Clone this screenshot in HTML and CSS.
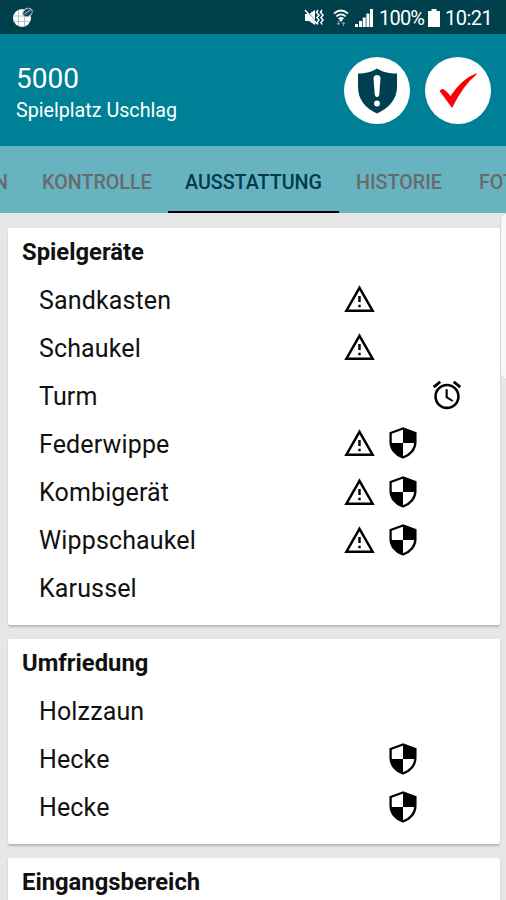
FILE: index.html
```html
<!DOCTYPE html>
<html lang="de">
<head>
<meta charset="utf-8">
<title>Spielplatz Uschlag</title>
<link rel="stylesheet" href="styles.css">
</head>
<body>
<svg class="defs" aria-hidden="true">
  <symbol id="warn" viewBox="0 0 31 28"><path d="M15.500 2.800L28.600 25.700H2.400z" fill="none" stroke="#000" stroke-width="2.500"/><path d="M14.300 11h2.400v6h-2.400zM14.300 19.800h2.400v2.400h-2.400z"/></symbol>
  <symbol id="shield" viewBox="0 0 28 32"><path d="M14 1.500L1.600 6V15c0 6.600 4.600 12.800 12.400 15.500C21.800 27.800 26.400 21.600 26.400 15V6z" fill="#fff" stroke="#000" stroke-width="2.300"/><path d="M14 1.500L26.400 6V16H14zM1.600 16H14v14.500C6.500 27.800 2 22 1.600 16z"/></symbol>
  <symbol id="alarm" viewBox="0 0 24 24"><path d="M22 5.720l-4.600-3.860-1.290 1.530 4.600 3.860L22 5.720zM7.880 3.390L6.600 1.860 2 5.710l1.290 1.530 4.590-3.850zM12.500 8H11v6l4.750 2.850.75-1.230-4-2.370V8zM12 4c-4.970 0-9 4.030-9 9s4.020 9 9 9c4.970 0 9-4.030 9-9s-4.030-9-9-9zm0 16.200c-3.980 0-7.200-3.220-7.200-7.200s3.220-7.200 7.200-7.200 7.200 3.220 7.200 7.200-3.220 7.200-7.200 7.200z"/></symbol>
</svg>
<div class="screen">
  <div class="status">
    <svg class="globe" viewBox="0 0 20 20"><circle cx="9.500" cy="11" r="9" fill="#fff"/><path d="M1 9h17M1 14.500h16M6 3v16M12 3v16" stroke="#9fb5ba" stroke-width=".8"/><ellipse cx="15" cy="5.500" rx="5" ry="4" transform="rotate(-35 15 5.500)" fill="#174b57" stroke="#b8cbd0"/><path d="M12 7l6-4" stroke="#b8cbd0"/></svg>
    <div class="indicators">
      <svg class="mute" viewBox="0 0 20 17"><path d="M1 5h4l6-4v15l-6-4H1z" fill="#fff"/><path d="M2 1l11 14" stroke="#003f4c" stroke-width="1.500"/><path d="M1 1l12 14" stroke="#fff" stroke-width="1.500"/><path d="M14 1l-1.500 2.500L15 6l-2 2.500L15 11l-2 2.500 1 2M18 1l-1.500 2.500L19 6l-2 2.500L19 11l-2 2.500 1 2" fill="none" stroke="#fff" stroke-width="1.500"/></svg>
      <svg class="wifi" viewBox="0 0 16 18"><g fill="none" stroke="#fff" stroke-width="1.700"><path d="M1 4.500q7-6 14 0M3.300 7.300q4.700-4 9.400 0M5.500 9.800q2.500-2 5 0"/></g><circle cx="8" cy="11" r="1.500" fill="#fff"/><path d="M5.500 12v3M4 14l1.500 2L7 14M10.500 17v-3M9 15l1.500-2 1.500 2" fill="none" stroke="#7d9fa7"/></svg>
      <svg class="signal" viewBox="0 0 18 18"><path d="M0 15h3v3H0zM4 12h3v6H4zM7.700 8.500h3V18h-3zM11.400 4.500h3V18h-3zM15 0h3v18h-3z" fill="#fff"/></svg>
      <span class="percent">100%</span>
      <svg class="battery" viewBox="0 0 12 18"><path d="M3.500 0h5v2H12v16H0V2h3.500z" fill="#fff"/></svg>
      <span class="time">10:21</span>
    </div>
  </div>
  <header class="header">
    <div class="titles">
      <h1>5000</h1>
      <p>Spielplatz Uschlag</p>
    </div>
    <div class="round"><svg viewBox="0 0 66 66"><path d="M33 11c-4 3-12 5-19 5v13c0 13 7 21.500 19 27 12-5.500 20-14 20-27V16c-8 0-16-2-20-5z" fill="#003f4f"/><path d="M29.500 21q0-3.500 3.500-3.500t3.500 3.500l-1.200 15.500q-.3 3-2.300 3t-2.300-3z" fill="#fff"/><circle cx="33" cy="46" r="2.900" fill="#fff"/></svg></div>
    <div class="round"><svg viewBox="0 0 66 66"><path d="M14.500 33.500q2.500-3 4.500-1.500 4 3 6.500 6.500Q37 21 52 15.500q-1 0-.5 1.500Q38 28 27 50.500 21 42 14.500 33.500z" fill="#fc0008"/></svg></div>
  </header>
  <nav class="tabs">
    <span class="tab stamm">STAMMDATEN</span>
    <span class="tab kontrolle">KONTROLLE</span>
    <span class="tab ausstattung active">AUSSTATTUNG</span>
    <span class="tab historie">HISTORIE</span>
    <span class="tab fotos">FOTOS</span>
  </nav>
  <main class="content">
    <section class="card">
      <h2>Spielgeräte</h2>
      <div class="row"><span>Sandkasten</span><svg class="warn"><use href="#warn"/></svg></div>
      <div class="row"><span>Schaukel</span><svg class="warn"><use href="#warn"/></svg></div>
      <div class="row"><span>Turm</span><svg class="alarm"><use href="#alarm"/></svg></div>
      <div class="row"><span>Federwippe</span><svg class="warn"><use href="#warn"/></svg><svg class="shield"><use href="#shield"/></svg></div>
      <div class="row"><span>Kombigerät</span><svg class="warn"><use href="#warn"/></svg><svg class="shield"><use href="#shield"/></svg></div>
      <div class="row"><span>Wippschaukel</span><svg class="warn"><use href="#warn"/></svg><svg class="shield"><use href="#shield"/></svg></div>
      <div class="row"><span>Karussel</span></div>
    </section>
    <section class="card">
      <h2>Umfriedung</h2>
      <div class="row"><span>Holzzaun</span></div>
      <div class="row"><span>Hecke</span><svg class="shield"><use href="#shield"/></svg></div>
      <div class="row"><span>Hecke</span><svg class="shield"><use href="#shield"/></svg></div>
    </section>
    <section class="card">
      <h2>Eingangsbereich</h2>
      <div class="row"></div>
    </section>
    <div class="scroll-edge"></div>
  </main>
</div>
</body>
</html>
```
FILE: styles.css
```css
* { box-sizing: border-box; }
body { margin: 0; font-family: Roboto, "Liberation Sans", sans-serif; color: #111; }
h1, h2, p { margin: 0; font-weight: 400; }
.defs { display: none; }
.screen { width: 506px; height: 900px; overflow: hidden; display: flex; flex-direction: column; background: #e7e7e7; }
.status { flex: none; height: 34px; background: #003f4c; display: flex; justify-content: space-between; padding: 0 15px 0 12px; color: #fff; }
.globe { width: 21px; height: 20px; margin-top: 7px; }
.indicators { display: flex; align-items: center; font-size: 20px; padding-top: 1px; }
.mute { width: 20px; height: 17px; margin-right: 9px; }
.wifi { width: 16px; height: 18px; margin-right: 6px; }
.signal { width: 18px; height: 18px; margin-right: 6px; }
.percent { width: 47px; margin-right: 2px; white-space: nowrap; letter-spacing: -.8px; }
.battery { width: 12px; height: 18px; margin-right: 5px; }
.time { width: 46px; white-space: nowrap; letter-spacing: -.5px; }
.header { flex: none; height: 112px; background: #008097; display: flex; gap: 15px; padding: 23px 15px 0 16px; color: #fff; }
.titles { flex: 1; padding-top: 4px; }
.titles h1 { font-size: 28px; line-height: 36px; }
.titles p { font-size: 19.700px; line-height: 27px; }
.round { width: 66px; height: 67px; border-radius: 50%; background: #fff; }
.round svg { display: block; width: 66px; height: 67px; }
.tabs { flex: none; height: 67px; background: #68b3c0; display: flex; }
.tab { flex: none; height: 67px; line-height: 73px; font-size: 19.700px; color: #686b6d; padding-left: 17px; white-space: nowrap; font-weight: 500; }
.stamm { width: 25px; padding: 0 17px 0 0; direction: rtl; }
.kontrolle { width: 143px; }
.ausstattung { width: 171px; }
.historie { width: 123px; }
.active { color: #003a50; border-bottom: 2px solid #000; }
.content { flex: 1; position: relative; padding: 15px 6px 0 8px; display: flex; flex-direction: column; gap: 14.200px; }
.card { flex: none; background: #fff; border-radius: 2px; box-shadow: 0 2px 2px #b8b8b8; padding-bottom: 12.200px; }
.card h2 { font-size: 23.800px; line-height: 49px; height: 48px; padding-left: 14px; font-weight: 700; }
.row { height: 48.150px; display: grid; grid-template-columns: 305px 31px 14.500px 28px 13px 33px; align-items: center; padding-left: 31px; font-size: 25px; letter-spacing: .14px; }
.row svg { grid-row: 1; display: block; }
.warn { width: 31px; height: 28px; grid-column: 2; margin: 0 0 2px -.3px; }
.shield { width: 28px; height: 32px; grid-column: 4; margin: 0 0 2px -.3px; }
.alarm { width: 34px; height: 34px; grid-column: 6; margin: 0 0 2px -.5px; }
.scroll-edge { position: absolute; top: 0; right: -8px; width: 14px; height: 167px; background: #f8f8f8; border: 1px solid #d8d8d8; border-radius: 7px; }
```
